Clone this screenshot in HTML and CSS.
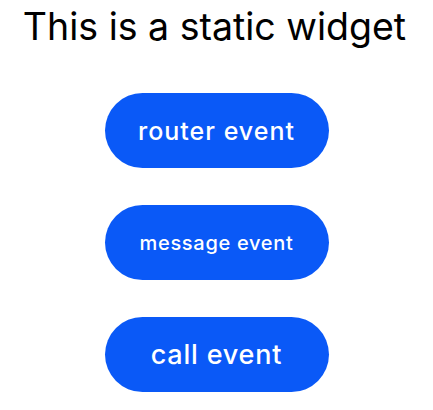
FILE: index.html
```html
<!DOCTYPE html>
<html>
<head>
<meta charset="utf-8">
<link rel="stylesheet" href="styles.css">
</head>
<body>
<div class="widget">
  <h1 class="title">This is a static widget</h1>
  <div class="buttons">
    <button class="btn btn-router">router event</button>
    <button class="btn btn-message">message event</button>
    <button class="btn btn-call">call event</button>
  </div>
</div>
</body>
</html>
```
FILE: styles.css
```css
html, body {
  margin: 0;
  padding: 0;
  background: #ffffff;
}
.widget {
  display: flex;
  flex-direction: column;
  align-items: center;
  font-family: Inter, "Open Sans", sans-serif;
}
.title {
  margin: 0;
  padding-top: 3px;
  font-size: 37.5px;
  font-weight: 400;
  line-height: 48px;
  color: #000000;
  transform: translateX(-2px);
}
.buttons {
  display: flex;
  flex-direction: column;
  align-items: center;
  gap: 37px;
  margin-top: 42px;
}
.btn {
  width: 224px;
  height: 75px;
  border: none;
  border-radius: 38px;
  background: #0a59f7;
  color: #ffffff;
  font-family: Inter, "Open Sans", sans-serif;
  font-weight: 500;
  padding: 0;
}
.btn-router { font-size: 25px; letter-spacing: 1px; }
.btn-message { font-size: 20px; letter-spacing: 0.7px; }
.btn-call { font-size: 27px; letter-spacing: 0.8px; }
```
